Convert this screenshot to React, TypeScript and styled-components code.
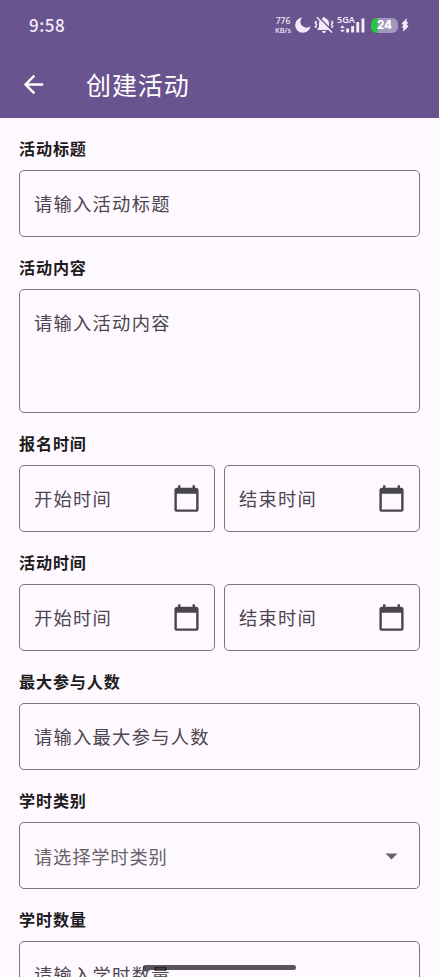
import React from "react";
import styled, { createGlobalStyle } from "styled-components";

const GlobalStyle = createGlobalStyle`
  *, *::before, *::after { box-sizing: border-box; }
  html, body { margin: 0; padding: 0; background: #fef9ff; overflow: hidden; }
  body { font-family: "Noto Sans CJK SC", sans-serif; }
`;

const Screen = styled.div`
  position: relative;
  width: 100%;
  height: 100vh;
  overflow: hidden;
  background: #fef9ff;
`;

const Header = styled.header`
  height: 118px;
  background: #6a548f;
  color: #fff;
`;

const StatusBar = styled.div`
  display: flex;
  align-items: center;
  height: 50px;
  padding: 0 30px 0 29px;
  color: #f3eafa;
`;

const Clock = styled.span`
  font: 500 17px/20px "Noto Sans CJK SC", sans-serif;
  letter-spacing: 0.5px;
`;

const StatusIcons = styled.div`
  display: flex;
  align-items: center;
  height: 22px;
  margin-left: auto;
`;

const Speed = styled.div`
  width: 18px;
  margin-right: 3px;
  font: 500 8.5px/10px "Noto Sans", "Open Sans", sans-serif;
  text-align: center;
  white-space: nowrap;
`;

const SpeedUnit = styled.div`
  font-size: 7.5px;
  line-height: 9px;
`;

const StatusGlyph = styled.svg<{ $gap: number }>`
  display: block;
  flex: none;
  margin-right: ${(p) => p.$gap}px;
`;

const Network = styled.div`
  position: relative;
  width: 28px;
  height: 18px;
  margin-right: 6px;
`;

const NetworkLabel = styled.span`
  position: absolute;
  left: 0;
  top: -3px;
  font: 600 9px/13px "Noto Sans", "Open Sans", sans-serif;
`;

const Battery = styled.div`
  display: flex;
  align-items: center;
  justify-content: center;
  width: 27px;
  height: 15px;
  margin-right: 3px;
  border-radius: 6px;
  background: linear-gradient(90deg, #2ac445 0 7px, #a398bc 7px);
  color: #fff;
  font: 800 11.5px/15px Inter, "Open Sans", sans-serif;
`;

const AppBar = styled.div`
  display: flex;
  align-items: center;
  height: 68px;
  padding-left: 19px;
`;

const BackButton = styled.button`
  display: flex;
  padding: 0;
  border: 0;
  background: none;
  color: #fff;
`;

const Title = styled.h1`
  margin: 0 0 0 38px;
  font-size: 25px;
  font-weight: 400;
  line-height: 34px;
  letter-spacing: 0.9px;
`;

const Form = styled.main`
  display: flex;
  flex-direction: column;
  padding: 0 19px;
`;

const Section = styled.section`
  flex: none;
  padding-top: 18px;
`;

const Label = styled.h2`
  margin: 0 0 10px;
  color: #1d1b20;
  font-size: 16.1px;
  font-weight: 600;
  line-height: 24px;
  letter-spacing: 0.85px;
`;

const FieldRow = styled.div`
  display: flex;
  gap: 9px;
`;

const Field = styled.div<{ $tall?: boolean }>`
  display: flex;
  flex: 1;
  align-items: ${(p) => (p.$tall ? "flex-start" : "center")};
  justify-content: space-between;
  height: ${(p) => (p.$tall ? 124 : 67)}px;
  padding: ${(p) => (p.$tall ? "19px" : "0")} 13px 0 14px;
  border: 1px solid #7a747e;
  border-radius: 5px;
`;

const Placeholder = styled.span<{ $select?: boolean; $tall?: boolean }>`
  margin-top: ${(p) => (p.$tall || p.$select ? 0 : -2)}px;
  color: ${(p) => (p.$select ? "#666268" : "#4b464f")};
  font-size: 18.3px;
  font-weight: 400;
  line-height: 26px;
  letter-spacing: ${(p) => (p.$select ? 0.8 : 1.25)}px;
  white-space: nowrap;
`;

const FieldIcon = styled.svg`
  display: block;
  flex: none;
`;

const HomeIndicator = styled.div`
  position: absolute;
  left: 143px;
  bottom: 7px;
  width: 153px;
  height: 5px;
  border-radius: 3px;
  background: rgba(0, 0, 0, 0.66);
`;

const BackArrow = () => (
  <svg width="29" height="29" viewBox="0 0 24 24" fill="currentColor">
    <path d="M20 11H7.83l5.59-5.59L12 4l-8 8 8 8 1.41-1.41L7.83 13H20v-2z" />
  </svg>
);

const CalendarIcon = () => (
  <FieldIcon width="29" height="29" viewBox="0 0 24 24" fill="#49454f">
    <path d="M20 3h-1V1h-2v2H7V1H5v2H4c-1.100 0-2 .9-2 2v16c0 1.100.9 2 2 2h16c1.100 0 2-.9 2-2V5c0-1.100-.9-2-2-2zm0 18H4V8h16v13z" />
  </FieldIcon>
);

const DropdownIcon = () => (
  <FieldIcon width="29" height="29" viewBox="0 0 24 24" fill="#666268">
    <path d="M7 10.400l5 5 5-5z" />
  </FieldIcon>
);

const MoonIcon = () => (
  <StatusGlyph $gap={3} width="16" height="16" viewBox="0 0 16 16" fill="currentColor">
    <path d="M7.200 .4A5.400 5.400 0 0 0 15.500 9 7.700 7.700 0 1 1 7.200 .4Z" />
  </StatusGlyph>
);

const MutedBellIcon = () => (
  <StatusGlyph $gap={3} width="20" height="18" viewBox="0 0 20 18" fill="none" stroke="currentColor">
    <path d="M10 1a1.500 1.500 0 0 1 1.500 1.500C14 3.200 15 5 15 7.500V11l1.500 2v1h-13v-1L5 11V7.500c0-2.500 1-4.300 3.500-5A1.500 1.500 0 0 1 10 1ZM8 15h4c0 2.500-4 2.500-4 0Z" fill="currentColor" stroke="none" />
    <path d="M2.500 5 1.300 6.800l1.300 1.800-1.300 1.800 1.200 1.500M17.500 5l1.200 1.800-1.300 1.800 1.300 1.800-1.200 1.500" strokeWidth="1.500" />
    <path d="M4.300 .8 18.800 15.300" stroke="#6a548f" strokeWidth="1.600" />
    <path d="M2.800 1.200 18 16.500" strokeWidth="1.500" />
  </StatusGlyph>
);

const NetworkIcon = () => (
  <Network>
    <NetworkLabel>5GA</NetworkLabel>
    <StatusGlyph $gap={0} width="28" height="18" viewBox="0 0 28 18" fill="currentColor">
      <path d="m3 12 2.400-2.700 2.400 2.700zM3 13.700h4.800l-2.400 2.700zM9.200 12.500h2.900v4H9.200zM14.200 10h2.900v6.500h-2.900zM19.300 6h2.900v10.500h-2.900zM24.500 2.500h2.900v14h-2.900z" />
    </StatusGlyph>
  </Network>
);

const ChargingIcon = () => (
  <StatusGlyph $gap={0} width="8" height="14" viewBox="0 0 8 14" fill="currentColor">
    <path d="M5.800 .2.600 5.500l2 1.800-2 2 1.800.8-.2 3.700 5.400-5.600-2-1.700 2-2-2-.6z" />
  </StatusGlyph>
);

const TextSection = ({ label, hint, tall }: { label: string; hint: string; tall?: boolean }) => (
  <Section>
    <Label>{label}</Label>
    <FieldRow>
      <Field $tall={tall}>
        <Placeholder $tall={tall}>{hint}</Placeholder>
      </Field>
    </FieldRow>
  </Section>
);

const DateRangeSection = ({ label }: { label: string }) => (
  <Section>
    <Label>{label}</Label>
    <FieldRow>
      {["开始时间", "结束时间"].map((hint) => (
        <Field key={hint}>
          <Placeholder>{hint}</Placeholder>
          <CalendarIcon />
        </Field>
      ))}
    </FieldRow>
  </Section>
);

export default function App() {
  return (
    <>
      <GlobalStyle />
      <Screen>
        <Header>
          <StatusBar>
            <Clock>9:58</Clock>
            <StatusIcons>
              <Speed>
                <div>776</div>
                <SpeedUnit>KB/s</SpeedUnit>
              </Speed>
              <MoonIcon />
              <MutedBellIcon />
              <NetworkIcon />
              <Battery>24</Battery>
              <ChargingIcon />
            </StatusIcons>
          </StatusBar>
          <AppBar>
            <BackButton aria-label="返回">
              <BackArrow />
            </BackButton>
            <Title>创建活动</Title>
          </AppBar>
        </Header>
        <Form>
          <TextSection label="活动标题" hint="请输入活动标题" />
          <TextSection label="活动内容" hint="请输入活动内容" tall />
          <DateRangeSection label="报名时间" />
          <DateRangeSection label="活动时间" />
          <TextSection label="最大参与人数" hint="请输入最大参与人数" />
          <Section>
            <Label>学时类别</Label>
            <FieldRow>
              <Field>
                <Placeholder $select>请选择学时类别</Placeholder>
                <DropdownIcon />
              </Field>
            </FieldRow>
          </Section>
          <TextSection label="学时数量" hint="请输入学时数量" />
        </Form>
        <HomeIndicator />
      </Screen>
    </>
  );
}
